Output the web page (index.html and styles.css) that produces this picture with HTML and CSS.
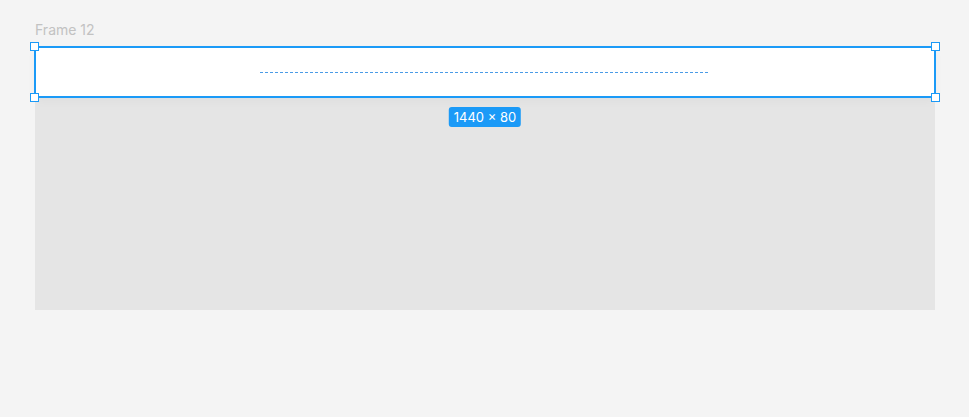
FILE: index.html
```html
<!DOCTYPE html>
<html lang="en">
<head>
    <meta charset="UTF-8">
    <title>Frame 12</title>
    <link rel="stylesheet" href="styles.css">
</head>
<body>
    <div class="canvas">
        <div class="frame-name">Frame 12</div>
        <div class="frame">
            <div class="header">
                <div class="guide"></div>
                <span class="handle tl"></span>
                <span class="handle tr"></span>
                <span class="handle bl"></span>
                <span class="handle br"></span>
                <div class="size-badge">1440 × 80</div>
            </div>
        </div>
    </div>
</body>
</html>
```

FILE: styles.css
```css
body {
    margin: 0;
    background: #f4f4f4;
    font-family: Inter, "Noto Sans", sans-serif;
}

.canvas {
    padding: 20px 34px 0 35px;
}

.frame-name {
    font-size: 14px;
    line-height: 19px;
    color: #c2c2c2;
    margin-bottom: 8px;
}

.frame {
    width: 900px;
    height: 263px;
    background: #e5e5e5;
}

.header {
    position: relative;
    height: 50px;
    background: #fff;
    display: flex;
    align-items: center;
    justify-content: center;
    box-shadow: 0 4px 10px rgba(0, 0, 0, 0.03);
}

.header::after {
    content: "";
    position: absolute;
    inset: -1px;
    border: 2px solid #1b9af7;
    pointer-events: none;
}

.guide {
    width: 450px;
    height: 1px;
    background: repeating-linear-gradient(90deg, #4a9be6 0 3px, transparent 3px 5px);
}

.handle {
    position: absolute;
    width: 7px;
    height: 7px;
    background: #fff;
    border: 1.5px solid #1b9af7;
    z-index: 2;
}

.tl { left: -5px; top: -5px; }
.tr { right: -5px; top: -5px; }
.bl { left: -5px; bottom: -5px; }
.br { right: -5px; bottom: -5px; }

.size-badge {
    position: absolute;
    top: 60px;
    left: 50%;
    transform: translateX(-50%);
    background: #1b9af7;
    color: #fff;
    font-size: 13px;
    line-height: 20px;
    padding: 0 5px;
    border-radius: 3px;
    white-space: nowrap;
}
```
